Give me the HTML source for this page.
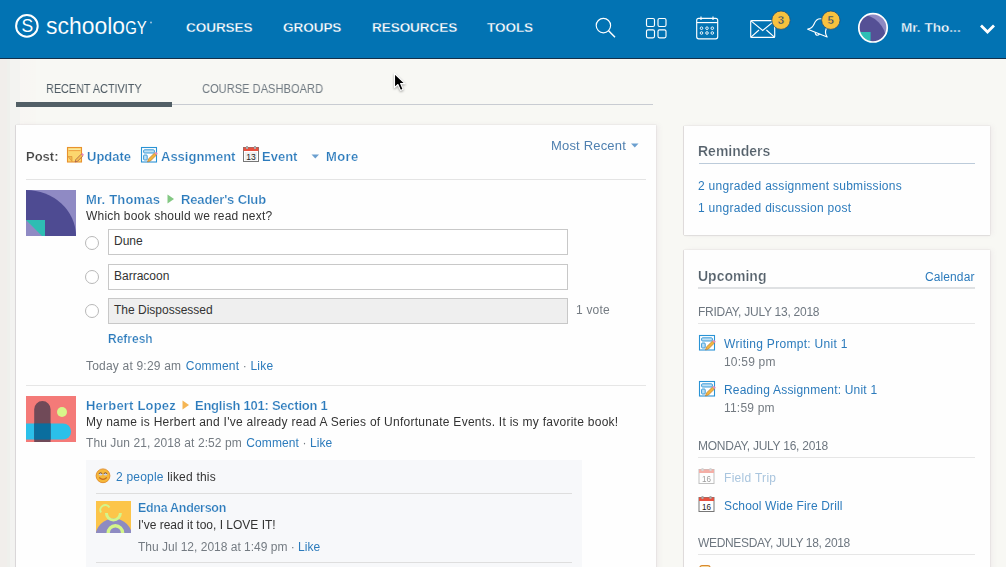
<!DOCTYPE html>
<html><head><meta charset="utf-8">
<style>
*{box-sizing:border-box;margin:0;padding:0}
html,body{width:1006px;height:567px;overflow:hidden}
body{background:#f8f8f4;font-family:"Liberation Sans",sans-serif;position:relative;color:#333}
.abs{position:absolute}
a{text-decoration:none}
#hdr{left:0;top:0;width:1006px;height:59px;background:#0273b3;border-bottom:1px solid #14304a}
.nav{top:21px;color:#fff;font-size:13.6px;line-height:14px;font-weight:bold;letter-spacing:-0.1px;-webkit-text-stroke:.35px #0273b3}
.edge{left:0;top:59px;width:36px;height:508px;background:linear-gradient(90deg,#f1eeeb 0,#f1eeeb 7px,#eff0ec 7px,#eff0ec 10.5px,#f3f3f1 10.5px,#f3f3f1 20px,#f8f6f3 20px,#f8f7f3 36px)}
.card{background:#fefefe;box-shadow:-1px 0 0 rgba(120,100,120,.12),0 0 1.5px rgba(60,40,60,.16),0 1px 1px rgba(0,0,0,.05),3px 0 5px rgba(160,110,150,.07)}
.t{position:absolute;white-space:nowrap;font-size:13px;line-height:16px;will-change:transform}
.lnk{color:#2c7bbc}
.gray{color:#6b6b6b}
.b{font-weight:bold;-webkit-text-stroke:.22px #fff}
.hr{position:absolute;height:1px;background:#e2e2e2}
.opt{position:absolute;left:108px;width:460px;height:26px;border:1px solid #c8c8c8;background:#fff;font-size:12px;line-height:22.5px;padding-left:5px;color:#333;letter-spacing:0}
.radio{position:absolute;left:85px;width:14px;height:14px;border:1px solid #b8b8b8;border-radius:50%;background:#fff}
</style></head><body>
<div id="hdr" class="abs">
<svg class="abs" style="left:0;top:0" width="160" height="58" viewBox="0 0 160 58">
<circle cx="26.9" cy="25.9" r="10.8" fill="none" stroke="#fff" stroke-width="2"/>
<text x="27.3" y="32.2" text-anchor="middle" font-family="Liberation Sans" font-size="17.5" fill="#fff">S</text>
<text x="46" y="33.5" font-family="Liberation Sans" font-size="24" fill="#fff" stroke="#0273b3" stroke-width=".12" textLength="79" lengthAdjust="spacingAndGlyphs">schoolo</text>
<text x="125.3" y="33.5" font-family="Liberation Sans" font-size="17.5" fill="#fff" textLength="21.5" lengthAdjust="spacingAndGlyphs">GY</text>
<circle cx="151" cy="22.5" r="1" fill="#9cc3e0"/>
</svg>
<div class="nav abs" style="left:186px">COURSES</div>
<div class="nav abs" style="left:283px">GROUPS</div>
<div class="nav abs" style="left:372px">RESOURCES</div>
<div class="nav abs" style="left:487px">TOOLS</div>
<svg class="abs" style="left:580px;top:0" width="426" height="58" viewBox="580 0 426 58">
<g fill="none" stroke="#fff" stroke-width="1.15">
<circle cx="603.4" cy="25.6" r="7.2"/>
<line x1="608.6" y1="30.8" x2="615" y2="37.2" stroke-width="1.5"/>
<rect x="646.5" y="18.5" width="8" height="8" rx="1.5"/>
<rect x="658" y="18.5" width="8" height="8" rx="1.5"/>
<rect x="646.5" y="29.8" width="8" height="8" rx="1.5"/>
<rect x="658" y="29.8" width="8" height="8" rx="1.5"/>
<rect x="696.7" y="18.3" width="21" height="20.5" rx="2"/>
<line x1="696.7" y1="22.6" x2="717.7" y2="22.6"/>
<line x1="701" y1="16.5" x2="701" y2="20"/>
<line x1="713" y1="16.5" x2="713" y2="20"/>
<circle cx="701.5" cy="28.2" r="1.3" stroke-width=".9"/><circle cx="707" cy="28.2" r="1.3" stroke-width=".9"/><circle cx="712.3" cy="28.2" r="1.3" stroke-width=".9"/>
<circle cx="701.5" cy="33" r="1.3" stroke-width=".9"/><circle cx="707" cy="33" r="1.3" stroke-width=".9"/><circle cx="712.3" cy="33" r="1.3" stroke-width=".9"/>
<rect x="750.7" y="20.6" width="24" height="16.8" rx="1"/>
<path d="M750.7 20.6 L762.7 30.5 L774.7 20.6 M750.7 37.4 L759 30 M774.7 37.4 L766.4 30"/>
<g transform="translate(1.5 0) rotate(22 818 28)"><path d="M807.5 33.5 Q811.5 31 811.5 26 Q811.5 19 818 18.5 Q824.5 19 824.5 26 Q824.5 31 828.5 33.5 Z" stroke-linejoin="round"/><path d="M815.5 33.8 Q818 37.5 820.5 33.8"/></g>
</g>
<g>
<circle cx="781" cy="20.2" r="9.2" fill="#f8c13e" stroke="#1e4d78" stroke-width=".8"/>
<text x="781" y="24.3" text-anchor="middle" font-family="Liberation Sans" font-weight="bold" font-size="11.5" fill="#24496c" stroke="#f8c13e" stroke-width=".35">3</text>
<circle cx="830.8" cy="20.2" r="9.2" fill="#f8c13e" stroke="#1e4d78" stroke-width=".8"/>
<text x="830.8" y="24.3" text-anchor="middle" font-family="Liberation Sans" font-weight="bold" font-size="11.5" fill="#24496c" stroke="#f8c13e" stroke-width=".35">5</text>
</g>
<defs><clipPath id="avc"><circle cx="873" cy="28" r="14"/></clipPath></defs>
<g clip-path="url(#avc)">
<rect x="858" y="13" width="31" height="31" fill="#8e89c2"/>
<circle cx="860.3" cy="40.4" r="25.8" fill="#555095"/>
<rect x="858" y="32" width="12.6" height="12" fill="#2ebfb5"/>
</g>
<circle cx="873" cy="27.8" r="14.2" fill="none" stroke="#fff" stroke-width="1.7"/>
<path d="M981 25.5 L987.5 32 L994 25.5" fill="none" stroke="#fff" stroke-width="2.8"/>
</svg>
<div class="nav abs" style="left:901px;letter-spacing:0px">Mr. Tho...</div>
</div>
<div class="edge abs"></div>

<!-- tabs -->
<div class="t" style="left:46px;top:82.1px;font-size:13.4px;line-height:13.4px;letter-spacing:0;color:#4f5b64;transform:scaleX(.81);transform-origin:0 0">RECENT ACTIVITY</div>
<div class="t" style="left:202px;top:82.1px;font-size:13.4px;line-height:13.4px;letter-spacing:0;color:#707a82;transform:scaleX(.83);transform-origin:0 0">COURSE DASHBOARD</div>
<div class="abs" style="left:16px;top:102px;width:156px;height:5px;background:#525f66"></div>
<div class="abs" style="left:172px;top:104px;width:481px;height:1px;background:#c9ccd2"></div>

<!-- main card -->
<div class="card abs" style="left:16px;top:125px;width:640px;height:460px"></div>
<div class="t b" style="left:26px;top:149.8px;font-size:13px;line-height:13px;color:#444">Post:</div>
<svg class="abs" style="left:66px;top:146px" width="18" height="17" viewBox="0 0 18 17">
<rect x="1.5" y="1.5" width="14" height="14.5" fill="#fcd66e" stroke="#e8922e" stroke-width="1.1"/>
<rect x="2.6" y="2.6" width="11.8" height="2" fill="#f9e9a0"/>
<line x1="2.5" y1="4.6" x2="14.5" y2="4.6" stroke="#eea040" stroke-width="1"/>
<path d="M2 10.5 L6 10.5 L6 15.5 Z" fill="#f2b850" stroke="#d98a30" stroke-width=".6"/>
<path d="M9.2 16 L9.8 13.6 L15.2 8.2 L16.9 9.9 L11.5 15.3 Z" fill="#f8c050" stroke="#8a3a4a" stroke-width=".6"/>
<path d="M15.2 8.2 L16.9 9.9 L18 8.8 L16.3 7.1 Z" fill="#e98ac0"/>
</svg>
<div class="t b lnk" style="left:87px;top:149.8px;font-size:13px;line-height:13px">Update</div>
<svg class="abs" style="left:140px;top:146px" width="18" height="17" viewBox="0 0 18 17">
<rect x="1.5" y="1.5" width="15" height="14.5" fill="#fff" stroke="#2a93d5" stroke-width="1.1"/>
<rect x="3.6" y="3.8" width="10.8" height="3.2" rx="1" fill="#bfe0f5" stroke="#2a93d5" stroke-width=".9"/>
<rect x="3.6" y="9" width="3.6" height="5" rx=".8" fill="#bfe0f5" stroke="#2a93d5" stroke-width=".9"/>
<path d="M7.5 16 L8.3 13 L14.5 7 L16.5 9 L10.5 15 Z" fill="#f4b43c" stroke="#a0703a" stroke-width=".6"/>
<path d="M14.5 7 L16.5 9 L17.8 7.7 L15.8 5.7 Z" fill="#e68ab8"/>
</svg>
<div class="t b lnk" style="left:161px;top:149.8px;font-size:13px;line-height:13px">Assignment</div>
<svg class="abs" style="left:242px;top:145px" width="18" height="18" viewBox="0 0 18 18">
<rect x="1.5" y="2.5" width="15" height="14" fill="#fff" stroke="#777"/>
<rect x="1.5" y="2.5" width="15" height="3.5" fill="#e8513f"/>
<rect x="4" y="1" width="2" height="3" fill="#aaa"/><rect x="12" y="1" width="2" height="3" fill="#aaa"/>
<rect x="3" y="7" width="12" height="8.5" fill="#efefef"/><text x="9" y="14.6" text-anchor="middle" font-family="Liberation Sans" font-size="9.5" fill="#222" textLength="9.5" lengthAdjust="spacingAndGlyphs">13</text>
</svg>
<div class="t b lnk" style="left:262px;top:149.8px;font-size:13px;line-height:13px">Event</div>
<svg class="abs" style="left:311px;top:154px" width="9" height="5" viewBox="0 0 9 5"><path d="M0.5 0.5 L8 0.5 L4.25 4.5 Z" fill="#6b9fcf"/></svg>
<div class="t b lnk" style="left:326px;top:149.8px;font-size:13px;line-height:13px;letter-spacing:.4px">More</div>
<div class="t" style="left:551px;top:139.4px;font-size:13px;line-height:13px;color:#4f80b0;letter-spacing:.18px">Most Recent</div>
<svg class="abs" style="left:631px;top:143px" width="8" height="5" viewBox="0 0 8 5"><path d="M0 0.5 L7.5 0.5 L3.75 4.5 Z" fill="#6b9fcf"/></svg>
<div class="hr" style="left:26px;top:179px;width:620px;background:#e4e4e4"></div>

<!-- post 1 -->
<svg class="abs" style="left:26px;top:190px" width="50" height="46" viewBox="0 0 50 46">
<rect width="50" height="46" fill="#8f8ac4"/>
<path d="M0 0 A50 46 0 0 1 50 46 L0 46 Z" fill="#4e4b92"/>
<rect x="0" y="30" width="19" height="16" fill="#2ebdb3"/>
<path d="M0 30 L0 46 L16 46 Z" fill="#8f8ac4"/>
</svg>
<div class="t b lnk" style="left:86px;top:193.2px;font-size:13px;line-height:13px;letter-spacing:.2px">Mr. Thomas</div>
<svg class="abs" style="left:167px;top:194px" width="8" height="10" viewBox="0 0 8 10"><path d="M0.5 0.5 L7 5 L0.5 9.5 Z" fill="#83c883"/></svg>
<div class="t b lnk" style="left:181px;top:193.2px;font-size:13px;line-height:13px;letter-spacing:-.15px">Reader's Club</div>
<div class="t" style="left:86px;top:209.6px;font-size:12px;line-height:12px;letter-spacing:.2px;color:#333">Which book should we read next?</div>
<div class="radio" style="top:235.5px"></div>
<div class="opt" style="top:229px">Dune</div>
<div class="radio" style="top:270px"></div>
<div class="opt" style="top:264px">Barracoon</div>
<div class="radio" style="top:304px"></div>
<div class="opt" style="top:298px;background:#efefef">The Dispossessed</div>
<div class="t" style="left:576px;top:304.1px;font-size:12px;line-height:12px;color:#747b82;letter-spacing:.2px">1 vote</div>
<div class="t b lnk" style="left:108px;top:333.3px;font-size:12px;line-height:12px">Refresh</div>
<div class="t" style="left:86px;top:359.8px;font-size:12px;line-height:12px;color:#747b82;letter-spacing:.2px">Today at 9:29 am <span class="lnk" style="margin-left:1px">Comment</span> · <span class="lnk">Like</span></div>
<div class="hr" style="left:26px;top:385px;width:620px;background:#e6e6e6"></div>

<!-- post 2 -->
<svg class="abs" style="left:26px;top:396px" width="50" height="46" viewBox="0 0 50 46">
<rect width="50" height="46" fill="#f47a78"/>
<path d="M0 27.4 L37 27.4 A8.1 8.1 0 0 1 37 43.6 L0 43.6 Z" fill="#2bc0ea"/>
<path d="M8.2 13.2 A8.2 8.2 0 0 1 24.6 13.2 L24.6 46 L8.2 46 Z" fill="#704a58"/>
<rect x="8.2" y="27.4" width="16.4" height="16.2" fill="#0a6e9e"/>
<circle cx="36" cy="16" r="5" fill="#d8f58a"/>
</svg>
<div class="t b lnk" style="left:86px;top:398.7px;font-size:13px;line-height:13px;letter-spacing:.2px">Herbert Lopez</div>
<svg class="abs" style="left:182px;top:400px" width="8" height="10" viewBox="0 0 8 10"><path d="M0.5 0.5 L7 5 L0.5 9.5 Z" fill="#f5b553"/></svg>
<div class="t b lnk" style="left:195px;top:398.7px;font-size:13px;line-height:13px;letter-spacing:-.25px">English 101: Section 1</div>
<div class="t" style="left:86px;top:416.4px;font-size:12px;line-height:12px;letter-spacing:.27px;color:#333">My name is Herbert and I've already read A Series of Unfortunate Events. It is my favorite book!</div>
<div class="t" style="left:86px;top:437.4px;font-size:12px;line-height:12px;color:#747b82;letter-spacing:.09px">Thu Jun 21, 2018 at 2:52 pm <span class="lnk" style="margin-left:1px">Comment</span> · <span class="lnk">Like</span></div>

<div class="abs" style="left:86px;top:460px;width:496px;height:120px;background:#f7f8fa"></div>
<svg class="abs" style="left:95px;top:468px" width="16" height="16" viewBox="0 0 16 16">
<circle cx="8" cy="7.8" r="6.9" fill="#f6b83a" stroke="#e08a28" stroke-width=".9"/>
<ellipse cx="5.6" cy="6.2" rx="1.7" ry="1.4" fill="#c8d0e8"/>
<ellipse cx="10.4" cy="6.2" rx="1.7" ry="1.4" fill="#c8d0e8"/>
<path d="M3.8 5.6 Q5.6 4 7.3 5.6 M8.7 5.6 Q10.4 4 12.2 5.6" stroke="#7a4a20" fill="none" stroke-width="1"/>
<path d="M4.2 9.5 Q8 13.2 11.8 9.5" stroke="#c06a20" fill="none" stroke-width="1.1"/>
</svg>
<div class="t" style="left:116px;top:471.2px;font-size:12px;line-height:12px;color:#333;letter-spacing:.2px"><span class="lnk">2 people</span> liked this</div>
<div class="hr" style="left:96px;top:493px;width:476px;background:#dedede"></div>
<svg class="abs" style="left:96px;top:501px" width="35" height="32" viewBox="96 501 35 32">
<defs><clipPath id="edc"><rect x="96" y="501" width="35" height="32"/></clipPath></defs>
<g clip-path="url(#edc)">
<rect x="96" y="501" width="35" height="32" fill="#fcc54a"/>
<circle cx="113.8" cy="537" r="18.5" fill="#8e8bc2"/>
<path d="M106.4 513 A7 7 0 0 0 120.4 513" fill="none" stroke="#d4f58a" stroke-width="3"/>
<path d="M108.2 533 A7.2 7.2 0 0 1 122.6 533" fill="none" stroke="#d4f58a" stroke-width="3.4"/>
<path d="M101 512.5 A4.5 4.5 0 0 1 109.5 507.5" fill="none" stroke="#d4f58a" stroke-width="2"/>
</g>
</svg>
<div class="t b lnk" style="left:138px;top:502.3px;font-size:12.5px;line-height:12.5px;letter-spacing:-.3px">Edna Anderson</div>
<div class="t" style="left:138px;top:518.5px;font-size:12px;line-height:12px;color:#333;letter-spacing:0px">I've read it too, I LOVE IT!</div>
<div class="t" style="left:138px;top:540.5px;font-size:12px;line-height:12px;color:#747b82;letter-spacing:0px">Thu Jul 12, 2018 at 1:49 pm · <span class="lnk">Like</span></div>
<div class="hr" style="left:96px;top:562px;width:476px;background:#dedede"></div>
<!-- right cards -->
<div class="card abs" style="left:684px;top:126px;width:306px;height:109px"></div>
<div class="t b" style="left:698px;top:143.9px;font-size:14px;line-height:14px;color:#55616b">Reminders</div>
<div class="hr" style="left:699px;top:163px;width:276px;background:#bccbda"></div>
<div class="t lnk" style="left:698px;top:179.5px;font-size:12px;line-height:12px;letter-spacing:.28px">2 ungraded assignment submissions</div>
<div class="t lnk" style="left:698px;top:202.2px;font-size:12px;line-height:12px;letter-spacing:.28px">1 ungraded discussion post</div>

<div class="card abs" style="left:684px;top:250px;width:306px;height:340px"></div>
<div class="t b" style="left:698px;top:268.9px;font-size:14px;line-height:14px;color:#55616b">Upcoming</div>
<div class="t lnk" style="left:925px;top:270.6px;font-size:12px;line-height:12px;letter-spacing:.1px">Calendar</div>
<div class="hr" style="left:698px;top:287px;width:277px;height:2px;background:#dfe1e3"></div>
<div class="t" style="left:698px;top:306.4px;font-size:12px;line-height:12px;color:#6e7780;letter-spacing:-.25px">FRIDAY, JULY 13, 2018</div>
<div class="hr" style="left:698px;top:323px;width:277px;background:#e6e6e6"></div>
<svg class="abs" style="left:698px;top:334px" width="18" height="17" viewBox="0 0 18 17">
<rect x="1.5" y="1.5" width="15" height="14.5" fill="#fff" stroke="#2a93d5" stroke-width="1.1"/>
<rect x="3.6" y="3.8" width="10.8" height="3.2" rx="1" fill="#bfe0f5" stroke="#2a93d5" stroke-width=".9"/>
<rect x="3.6" y="9" width="3.6" height="5" rx=".8" fill="#bfe0f5" stroke="#2a93d5" stroke-width=".9"/>
<path d="M7.5 16 L8.3 13 L14.5 7 L16.5 9 L10.5 15 Z" fill="#f4b43c" stroke="#a0703a" stroke-width=".6"/>
<path d="M14.5 7 L16.5 9 L17.8 7.7 L15.8 5.7 Z" fill="#e68ab8"/>
</svg>
<div class="t lnk" style="left:724px;top:338.3px;font-size:12px;line-height:12px;letter-spacing:.3px">Writing Prompt: Unit 1</div>
<div class="t" style="left:724px;top:356.4px;font-size:12px;line-height:12px;color:#747b82;letter-spacing:.2px">10:59 pm</div>
<svg class="abs" style="left:698px;top:380px" width="18" height="17" viewBox="0 0 18 17">
<rect x="1.5" y="1.5" width="15" height="14.5" fill="#fff" stroke="#2a93d5" stroke-width="1.1"/>
<rect x="3.6" y="3.8" width="10.8" height="3.2" rx="1" fill="#bfe0f5" stroke="#2a93d5" stroke-width=".9"/>
<rect x="3.6" y="9" width="3.6" height="5" rx=".8" fill="#bfe0f5" stroke="#2a93d5" stroke-width=".9"/>
<path d="M7.5 16 L8.3 13 L14.5 7 L16.5 9 L10.5 15 Z" fill="#f4b43c" stroke="#a0703a" stroke-width=".6"/>
<path d="M14.5 7 L16.5 9 L17.8 7.7 L15.8 5.7 Z" fill="#e68ab8"/>
</svg>
<div class="t lnk" style="left:724px;top:384.4px;font-size:12px;line-height:12px;letter-spacing:.2px">Reading Assignment: Unit 1</div>
<div class="t" style="left:724px;top:402.0px;font-size:12px;line-height:12px;color:#747b82;letter-spacing:.2px">11:59 pm</div>
<div class="t" style="left:698px;top:439.8px;font-size:12px;line-height:12px;color:#6e7780;letter-spacing:-.25px">MONDAY, JULY 16, 2018</div>
<div class="hr" style="left:698px;top:457px;width:277px;background:#e6e6e6"></div>
<svg class="abs" style="left:698px;top:467px;opacity:0.45" width="17" height="17" viewBox="0 0 17 17">
<rect x="1" y="2.5" width="15" height="14" fill="#fff" stroke="#777"/>
<rect x="1" y="2.5" width="15" height="3.5" fill="#e8513f"/>
<rect x="3.5" y="1" width="2" height="3" fill="#aaa"/><rect x="11.5" y="1" width="2" height="3" fill="#aaa"/>
<text x="8.5" y="14.6" text-anchor="middle" font-family="Liberation Sans" font-size="9" fill="#222" textLength="9" lengthAdjust="spacingAndGlyphs">16</text>
</svg>
<div class="t" style="left:724px;top:471.8px;font-size:12px;line-height:12px;color:#a9c5de;letter-spacing:.3px">Field Trip</div>
<svg class="abs" style="left:698px;top:495px;opacity:1" width="17" height="17" viewBox="0 0 17 17">
<rect x="1" y="2.5" width="15" height="14" fill="#fff" stroke="#777"/>
<rect x="1" y="2.5" width="15" height="3.5" fill="#e8513f"/>
<rect x="3.5" y="1" width="2" height="3" fill="#aaa"/><rect x="11.5" y="1" width="2" height="3" fill="#aaa"/>
<text x="8.5" y="14.6" text-anchor="middle" font-family="Liberation Sans" font-size="9" fill="#222" textLength="9" lengthAdjust="spacingAndGlyphs">16</text>
</svg>
<div class="t lnk" style="left:724px;top:499.5px;font-size:12px;line-height:12px;letter-spacing:.15px">School Wide Fire Drill</div>
<div class="t" style="left:698px;top:537.0px;font-size:12px;line-height:12px;color:#6e7780;letter-spacing:-.33px">WEDNESDAY, JULY 18, 2018</div>
<div class="hr" style="left:698px;top:554px;width:277px;background:#e6e6e6"></div>
<svg class="abs" style="left:698px;top:563px" width="17" height="6" viewBox="0 0 17 6"><rect x="2" y="2.6" width="10" height="10" rx="2" fill="#fdf0c0" stroke="#d98a30" stroke-width="1.3"/></svg>

<!-- cursor -->
<svg class="abs" style="left:393px;top:72px;filter:drop-shadow(.5px 1px 1px rgba(0,0,0,.35))" width="16" height="21" viewBox="0 0 16 21">
<path d="M1.5 1.5 L1.5 15.6 L4.9 12.5 L7.5 18.4 L10.1 17.3 L7.6 11.6 L12 11.6 Z" fill="#000" stroke="#fff" stroke-width="1.1" stroke-linejoin="round"/>
</svg>
</body></html>
